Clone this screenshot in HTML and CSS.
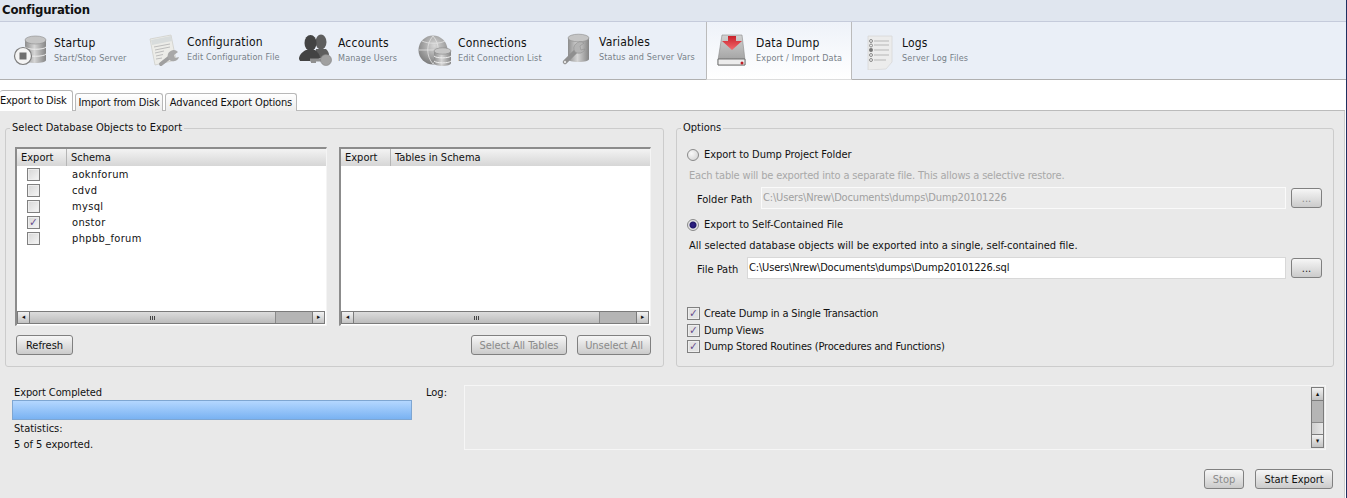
FILE: index.html
```html
<!DOCTYPE html>
<html lang="en">
<head>
    <meta charset="UTF-8">
    <title>Configuration</title>
    <link rel="stylesheet" href="styles.css">
</head>
<body>

<div class="app">
    <div class="title-bar">Configuration</div>

    <div class="toolbar">
        <div class="tool">
            <svg class="tool-icon" viewBox="0 0 36 38">
                <defs>
                    <linearGradient id="metal" x1="0" x2="1" y1="0" y2="0">
                        <stop offset="0" stop-color="#8d8d8d"/>
                        <stop offset=".45" stop-color="#d5d5d5"/>
                        <stop offset="1" stop-color="#858585"/>
                    </linearGradient>
                    <linearGradient id="drive" x1="0" x2="0" y1="0" y2="1">
                        <stop offset="0" stop-color="#d2d2d2"/>
                        <stop offset="1" stop-color="#9a9a9a"/>
                    </linearGradient>
                    <linearGradient id="arrow" x1="0" x2="0" y1="0" y2="1">
                        <stop offset="0" stop-color="#c8202a"/>
                        <stop offset="1" stop-color="#f36a6e"/>
                    </linearGradient>
                    <radialGradient id="globe" cx=".55" cy=".35" r=".7">
                        <stop offset="0" stop-color="#d8d8d8"/>
                        <stop offset="1" stop-color="#777777"/>
                    </radialGradient>
                </defs>
                <path d="M12 8v20c0 2 4.500 3 10.500 3s10.500-1 10.500-3V8z" fill="url(#metal)"/>
                <ellipse cx="22.500" cy="8" rx="10.500" ry="4" fill="#c4c4c4" stroke="#8c8c8c" stroke-width=".6"/>
                <path d="M12 15c2 3 19 3 21 0M12 22c2 3 19 3 21 0" fill="none" stroke="#eee" stroke-width="1"/>
                <circle cx="10" cy="24" r="8.500" fill="#f4f4f4" stroke="#7d7d7d" stroke-width="1.200"/>
                <rect x="6.500" y="20.500" width="7" height="7" fill="#6e6e6e"/>
            </svg>
            <div class="tool-text"><div class="tool-name">Startup</div><div class="tool-sub">Start/Stop Server</div></div>
        </div>

        <div class="tool">
            <svg class="tool-icon" viewBox="0 0 36 38">
                <path d="M4 7l21-4 5 25-21 5z" fill="#ecece8" stroke="#cfcfca" stroke-width=".8"/>
                <path d="M5 8l20-4 1 5-20 4z" fill="#d8dcdc"/>
                <path d="M8 15l16-3M9 18l15-3M9 21l9-2M10 24l7-1.500M10 27l6-1" stroke="#bcbcbc" stroke-width="1"/>
                <path d="M15 32l9-7" stroke="#a0a0a0" stroke-width="4" stroke-linecap="round"/>
                <path d="M22 26a6 6 0 0 1 10-6l-4 3 1 3 4-1a6 6 0 0 1-11 1z" fill="#a8a8a8"/>
            </svg>
            <div class="tool-text"><div class="tool-name name-high">Configuration</div><div class="tool-sub">Edit Configuration File</div></div>
        </div>

        <div class="tool">
            <svg class="tool-icon" viewBox="0 0 36 38">
                <ellipse cx="24" cy="10" rx="5.500" ry="7.500" fill="#5e5e5e"/>
                <path d="M19 17h10c2 2 3 4 3 6l-7 3-8 1z" fill="#5e5e5e"/>
                <ellipse cx="13.500" cy="11" rx="6" ry="8" fill="#434343"/>
                <path d="M2 27c0-4 3-7 7-9h9c3 2 5 5 5 8l-5 3H3z" fill="#434343"/>
                <path d="M13 28h12" stroke="#8f8f8f" stroke-width="3"/>
                <path d="M14 30h5" stroke="#8f8f8f" stroke-width="2"/>
                <circle cx="29" cy="28" r="5.500" fill="#a0a0a0" stroke="#808080" stroke-width=".6"/>
            </svg>
            <div class="tool-text"><div class="tool-name">Accounts</div><div class="tool-sub">Manage Users</div></div>
        </div>

        <div class="tool">
            <svg class="tool-icon" viewBox="0 0 36 38">
                <circle cx="16" cy="18" r="14.500" fill="url(#globe)"/>
                <path d="M5 9c6 3 18 3 23 0M2 18h28M16 4c-7 8-7 20 0 28M16 4c7 8 7 20 0 28" fill="none" stroke="#e4e4e4" stroke-width=".8"/>
                <path d="M17 19v12c0 2 4 3 8.500 3s8.500-1 8.500-3V19z" fill="url(#metal)"/>
                <ellipse cx="25.500" cy="19" rx="8.500" ry="3.200" fill="#c6c6c6" stroke="#868686" stroke-width=".6"/>
                <path d="M17 24c2 2.500 15 2.500 17 0M17 29c2 2.500 15 2.500 17 0" fill="none" stroke="#efefef"/>
            </svg>
            <div class="tool-text"><div class="tool-name">Connections</div><div class="tool-sub">Edit Connection List</div></div>
        </div>

        <div class="tool">
            <svg class="tool-icon" viewBox="0 0 36 38">
                <path d="M10 6v21c0 2 4.500 3 10.500 3s10.500-1 10.500-3V6z" fill="url(#metal)"/>
                <ellipse cx="20.500" cy="6" rx="10.500" ry="3.800" fill="#c5c5c5" stroke="#8c8c8c" stroke-width=".6"/>
                <path d="M7 30l12-12" stroke="#8f8f8f" stroke-width="4.500" stroke-linecap="round"/>
                <circle cx="7" cy="30" r="1.200" fill="#e4e4e4"/>
                <path d="M17 20a6.500 6.500 0 0 1 9-9l-4 3 1 4 4-1a6.500 6.500 0 0 1-10 3z" fill="#b4b4b4" stroke="#8f8f8f" stroke-width=".6"/>
            </svg>
            <div class="tool-text"><div class="tool-name name-high">Variables</div><div class="tool-sub">Status and Server Vars</div></div>
        </div>

        <div class="tool tool-active">
            <svg class="tool-icon" viewBox="0 0 36 38">
                <path d="M7 3h20l3 25v5H3v-5z" fill="url(#drive)" stroke="#8a8a8a" stroke-width=".6"/>
                <path d="M3 27h27v6H3z" fill="#ececec" stroke="#5a5a5a" stroke-width=".8"/>
                <circle cx="27" cy="31" r="1.500" fill="#c01f26"/>
                <path d="M13 4h8v5h6l-10 9-10-9h6z" fill="url(#arrow)"/>
            </svg>
            <div class="tool-text"><div class="tool-name">Data Dump</div><div class="tool-sub">Export / Import Data</div></div>
        </div>

        <div class="tool">
            <svg class="tool-icon" viewBox="0 0 36 38">
                <path d="M7 4h24v26l-6 7-18 1z" fill="#ececec" stroke="#d8d8d8" stroke-width=".8"/>
                <path d="M13 9h15M13 13h15M13 18h15M13 23h15M13 28h12" stroke="#b5b5b5" stroke-width="1.200"/>
                <g fill="none" stroke="#8a8a8a" stroke-width="1">
                    <circle cx="10" cy="9" r="1.500"/><circle cx="10" cy="13.500" r="1.500"/>
                    <circle cx="10" cy="23" r="1.500"/><circle cx="10" cy="28" r="1.500"/>
                </g>
                <circle cx="10" cy="18" r="2" fill="#777"/>
            </svg>
            <div class="tool-text"><div class="tool-name">Logs</div><div class="tool-sub">Server Log Files</div></div>
        </div>
    </div>

    <div class="tab-strip">
        <div class="tab tab-active">Export to Disk</div>
        <div class="tab tab-import">Import from Disk</div>
        <div class="tab tab-advanced">Advanced Export Options</div>
    </div>

    <div class="panel">
        <div class="groups">
            <fieldset class="group">
                <legend>Select Database Objects to Export</legend>
                <div class="lists">
                    <div class="list">
                        <div class="list-head"><span class="col-export">Export</span><span>Schema</span></div>
                        <div class="list-body">
                            <div class="row"><span class="check"></span><span>aoknforum</span></div>
                            <div class="row"><span class="check"></span><span>cdvd</span></div>
                            <div class="row"><span class="check"></span><span>mysql</span></div>
                            <div class="row"><span class="check checked">&#10003;</span><span>onstor</span></div>
                            <div class="row"><span class="check"></span><span>phpbb_forum</span></div>
                        </div>
                        <div class="hscroll">
                            <span class="sb-btn">&#9666;</span>
                            <span class="sb-thumb"><span class="grip"></span></span>
                            <span class="sb-track"></span>
                            <span class="sb-btn">&#9656;</span>
                        </div>
                    </div>
                    <div class="list">
                        <div class="list-head"><span class="col-export">Export</span><span>Tables in Schema</span></div>
                        <div class="list-body"></div>
                        <div class="hscroll">
                            <span class="sb-btn">&#9666;</span>
                            <span class="sb-thumb"><span class="grip"></span></span>
                            <span class="sb-track"></span>
                            <span class="sb-btn">&#9656;</span>
                        </div>
                    </div>
                </div>
                <div class="list-actions">
                    <button class="btn btn-refresh">Refresh</button>
                    <div class="list-actions-right">
                        <button class="btn btn-select" disabled>Select All Tables</button>
                        <button class="btn btn-unselect" disabled>Unselect All</button>
                    </div>
                </div>
            </fieldset>

            <fieldset class="group group-options">
                <legend>Options</legend>
                <div class="opt-row opt-first"><span class="radio"></span><span>Export to Dump Project Folder</span></div>
                <div class="opt-note note-off">Each table will be exported into a separate file. This allows a selective restore.</div>
                <div class="path-row">
                    <span class="path-label label-folder">Folder Path</span>
                    <div class="path-input input-off">C:\Users\Nrew\Documents\dumps\Dump20101226</div>
                    <button class="btn btn-dots" disabled>...</button>
                </div>
                <div class="opt-row opt-second"><span class="radio radio-on"></span><span>Export to Self-Contained File</span></div>
                <div class="opt-note">All selected database objects will be exported into a single, self-contained file.</div>
                <div class="path-row">
                    <span class="path-label label-file">File Path</span>
                    <div class="path-input">C:\Users\Nrew\Documents\dumps\Dump20101226.sql</div>
                    <button class="btn btn-dots">...</button>
                </div>
                <div class="checks">
                    <div class="check-row"><span class="check checked">&#10003;</span><span>Create Dump in a Single Transaction</span></div>
                    <div class="check-row"><span class="check checked">&#10003;</span><span>Dump Views</span></div>
                    <div class="check-row"><span class="check checked">&#10003;</span><span>Dump Stored Routines (Procedures and Functions)</span></div>
                </div>
            </fieldset>
        </div>

        <div class="status">
            <div class="progress-box">
                <div class="progress-label">Export Completed</div>
                <div class="progress-bar"></div>
                <div class="stats">Statistics:</div>
                <div class="stats">5 of 5 exported.</div>
            </div>
            <div class="log-label">Log:</div>
            <div class="log-box">
                <div class="vscroll">
                    <span class="sb-btn">&#9652;</span>
                    <span class="vs-track"></span>
                    <span class="vs-thumb"></span>
                    <span class="sb-btn">&#9662;</span>
                </div>
            </div>
        </div>

        <div class="footer">
            <button class="btn btn-stop" disabled>Stop</button>
            <button class="btn btn-start">Start Export</button>
        </div>
    </div>
</div>

</body>
</html>
```

FILE: styles.css
```css
* {
    box-sizing: border-box;
}

html, body {
    height: 100%;
}

body {
    margin: 0;
    background-color: #ffffff;
    color: #111111;
    font-family: "DejaVu Sans Condensed", "DejaVu Sans", sans-serif;
    font-stretch: condensed;
    font-size: 11px;
    overflow: hidden;
}

.app {
    width: 1347px;
    height: 498px;
    border-right: 1px solid #1f3060;
    display: flex;
    flex-direction: column;
}

.title-bar {
    height: 22px;
    padding: 2px 2px 0;
    background-color: #e0e6ef;
    border-bottom: 1px solid #c5cbdb;
    font-size: 13px;
    font-weight: bold;
    letter-spacing: -.2px;
    line-height: 16px;
}

.toolbar {
    height: 58px;
    padding-left: 4px;
    background-color: #eaeff7;
    border-bottom: 1px solid #b0b0b0;
    display: flex;
}

.tool {
    padding: 10px 0 0 9px;
    display: flex;
    flex-shrink: 0;
}

.tool:nth-child(1) { width: 133px; }
.tool:nth-child(2) { width: 151px; }
.tool:nth-child(3) { width: 120px; }
.tool:nth-child(4) { width: 141px; }
.tool:nth-child(5) { width: 157px; }
.tool:nth-child(7) { width: 130px; }

.tool-active {
    width: 146px;
    height: 58px;
    padding-left: 8px;
    background: linear-gradient(#eef2f9, #ffffff);
    border-left: 1px solid #bbbbbb;
    border-right: 1px solid #bbbbbb;
    border-bottom: 1px solid #dddddd;
}

.tool-icon {
    width: 36px;
    height: 38px;
    margin-right: 5px;
    flex-shrink: 0;
}

.tool-name {
    margin-top: 4px;
    font-size: 12px;
    letter-spacing: .2px;
    line-height: 15px;
}

.name-high {
    margin-top: 3px;
}

.tool-sub {
    margin-top: 1px;
    font-size: 9px;
    letter-spacing: .15px;
    line-height: 12px;
    color: #777f88;
}

.tab-strip {
    height: 31px;
    width: 1345px;
    padding-top: 10px;
    border-bottom: 1px solid #bbbbbb;
    display: flex;
    align-items: flex-end;
}

.tab {
    height: 18px;
    margin-left: 2px;
    margin-bottom: -1px;
    padding-top: 1px;
    background: linear-gradient(#ffffff, #ececec);
    border: 1px solid #b8b8b8;
    border-bottom: none;
    border-radius: 3px 3px 0 0;
    letter-spacing: -.15px;
    line-height: 16px;
    text-align: center;
    white-space: nowrap;
}

.tab-import {
    width: 88px;
}

.tab-advanced {
    width: 132px;
}

.tab-active {
    height: 21px;
    width: 73px;
    margin-left: 0;
    padding: 2px 0 0;
    background: #ffffff;
    border-left: none;
    letter-spacing: -.25px;
    text-align: left;
}

.panel {
    flex: 1;
    width: 1345px;
    padding: 0 10px 0 5px;
    background-color: #e9e9e9;
    border-right: 1px solid #cccccc;
}

.groups {
    display: flex;
    gap: 12px;
}

.group {
    width: 659px;
    height: 247px;
    margin: 9px 0 0;
    padding: 0 11px 0 9px;
    border: 1px solid #cccccc;
    border-radius: 3px;
    min-width: 0;
}

.group legend {
    margin-left: -5px;
    padding: 0 2px;
    line-height: 16px;
}

.group-options {
    width: 658px;
}

.lists {
    margin-top: 11px;
    display: flex;
    gap: 12px;
}

.list {
    width: 312px;
    height: 179px;
    background-color: #ffffff;
    border: 2px solid #8c8c8c;
    border-right: 1px solid #f4f4f4;
    border-bottom: 1px solid #f4f4f4;
    display: flex;
    flex-direction: column;
}

.list-head {
    height: 17px;
    background: linear-gradient(#f3f3f3, #d6d6d6);
    line-height: 17px;
    display: flex;
}

.col-export {
    width: 50px;
    margin-right: 4px;
    padding-left: 4px;
    border-right: 1px solid #b5b5b5;
}

.list-body {
    flex: 1;
    padding-top: 1px;
}

.row {
    height: 16px;
    letter-spacing: .35px;
    line-height: 16px;
    display: flex;
    align-items: center;
}

.row .check {
    margin: -2px 32px 0 10px;
}

.check {
    width: 13px;
    height: 13px;
    background: linear-gradient(135deg, #d6d6d6, #f6f6f6);
    border: 1px solid #808080;
    box-shadow: inset 0 0 0 1px #eeeeee;
    flex-shrink: 0;
    font-size: 11px;
    line-height: 11px;
    text-align: center;
    letter-spacing: 0;
}

.checked {
    color: #644a8c;
    font-weight: bold;
}

.hscroll {
    height: 13px;
    margin-bottom: 1px;
    margin-right: 1px;
    background-color: #b5b5b5;
    border: 1px solid #7b7b7b;
    display: flex;
}

.sb-btn {
    width: 12px;
    height: 11px;
    background: linear-gradient(#f2f2f2, #c2c2c2);
    border-right: 1px solid #7b7b7b;
    border-left: 1px solid #7b7b7b;
    color: #111111;
    font-size: 7px;
    line-height: 11px;
    text-align: center;
    flex-shrink: 0;
}

.sb-btn:first-child {
    border-left: none;
}

.sb-btn:last-child {
    border-right: none;
}

.sb-thumb {
    flex: 1;
    background: linear-gradient(#dcdcdc, #bcbcbc);
    border-right: 1px solid #8a8a8a;
    display: flex;
    align-items: center;
    justify-content: center;
}

.grip {
    width: 5px;
    height: 4px;
    background: repeating-linear-gradient(90deg, #444444 0 1px, transparent 1px 2px);
}

.sb-track {
    width: 36px;
}

.list-actions {
    margin-top: 9px;
    display: flex;
    justify-content: space-between;
    padding-right: 1px;
}

.list-actions-right {
    display: flex;
    gap: 10px;
}

.btn {
    height: 20px;
    padding: 0;
    background: linear-gradient(#f6f6f6, #cbcbcb);
    border: 1px solid #808080;
    border-radius: 3px;
    color: #111111;
    font-family: inherit;
    font-stretch: condensed;
    font-size: 11px;
    letter-spacing: -.05px;
    line-height: 17px;
}

.btn:disabled {
    color: #8a8a8a;
}

.btn-refresh {
    width: 57px;
    margin-left: 1px;
}

.btn-select {
    width: 96px;
}

.btn-unselect {
    width: 74px;
}

.btn-dots {
    width: 31px;
    margin-left: 5px;
    color: #222222;
}

.opt-row {
    height: 16px;
    padding-left: 1px;
    letter-spacing: -.05px;
    line-height: 16px;
    display: flex;
    align-items: center;
    gap: 5px;
}

.opt-first {
    margin-top: 11px;
}

.opt-second {
    margin-top: 8px;
}

.radio {
    width: 12px;
    height: 12px;
    background: radial-gradient(circle at 35% 35%, #f8f8f8, #d0d0d0);
    border: 1px solid #8a8a8a;
    border-radius: 50%;
    flex-shrink: 0;
}

.radio-on {
    background: radial-gradient(circle, #30208a 0, #20186a 3px, #e4e4e4 4px);
}

.opt-note {
    height: 16px;
    margin-top: 5px;
    padding-left: 3px;
    line-height: 16px;
}

.note-off {
    color: #a8a8a8;
    letter-spacing: -.17px;
}

.path-row {
    height: 22px;
    margin-top: 3px;
    display: flex;
    align-items: center;
}

.path-label {
    padding-left: 11px;
    padding-top: 2px;
}

.label-folder {
    width: 75px;
}

.label-file {
    width: 61px;
}

.path-input {
    flex: 1;
    height: 22px;
    padding-left: 1px;
    background-color: #ffffff;
    border: 1px solid #d8d8d8;
    letter-spacing: -.16px;
    line-height: 20px;
}

.input-off {
    background-color: #ececec;
    border-color: #fafafa;
    color: #a0a0a0;
}

.checks {
    margin-top: 27px;
}

.check-row {
    height: 16.500px;
    padding-left: 1px;
    letter-spacing: -.18px;
    line-height: 16px;
    display: flex;
    align-items: center;
    gap: 4px;
}

.check-row .check {
    margin-top: -1px;
    background: #e2e2e2;
}

.status {
    height: 65px;
    margin-top: 18px;
    display: flex;
}

.progress-box {
    width: 419px;
    padding-left: 7px;
}

.progress-label {
    height: 15px;
    padding-left: 2px;
    letter-spacing: -.1px;
    line-height: 15px;
}

.progress-bar {
    width: 400px;
    height: 20px;
    background: linear-gradient(#b4d7ff, #79b2f2);
    border: 1px solid #7ea6d2;
}

.stats {
    height: 15px;
    margin-top: 1px;
    padding-left: 2px;
    line-height: 15px;
}

.log-label {
    width: 40px;
    padding-left: 2px;
    line-height: 15px;
}

.log-box {
    width: 862px;
    height: 65px;
    padding: 1px 1px 0 0;
    border: 1px solid #f6f6f6;
    display: flex;
    justify-content: flex-end;
}

.vscroll {
    width: 13px;
    height: 61px;
    background-color: #b5b5b5;
    border: 1px solid #7b7b7b;
    display: flex;
    flex-direction: column;
}

.vscroll .sb-btn {
    width: 11px;
    height: 12px;
    border: none;
    line-height: 12px;
}

.vs-track {
    flex: 1;
    border-top: 1px solid #7b7b7b;
}

.vs-thumb {
    height: 13px;
    background: linear-gradient(90deg, #cfcfcf, #e8e8e8);
    border-top: 1px solid #8a8a8a;
    border-bottom: 1px solid #7b7b7b;
}

.footer {
    margin-top: 19px;
    padding-right: 1px;
    display: flex;
    justify-content: flex-end;
    gap: 11px;
}

.btn-stop {
    width: 40px;
}

.btn-start {
    width: 78px;
}
```
